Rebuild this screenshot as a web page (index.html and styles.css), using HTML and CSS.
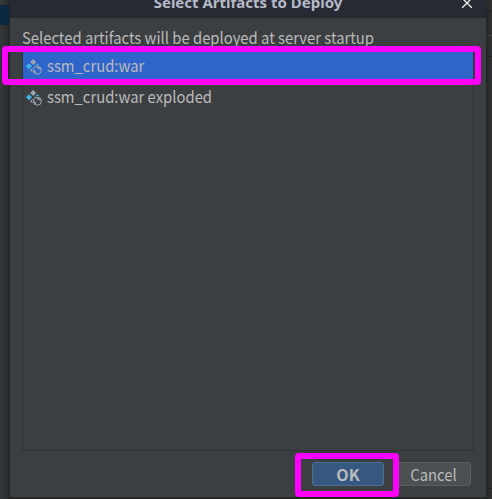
FILE: index.html
```html
<!DOCTYPE html>
<html lang="en">
<head>
<meta charset="utf-8">
<title>Select Artifacts to Deploy</title>
<link rel="stylesheet" href="styles.css">
</head>
<body>
<svg class="defs" width="0" height="0">
  <symbol id="artifact" viewBox="0 0 16 16">
    <path fill="#9da7b0" d="M7.2 0 10.1 3 7.2 6 4.2 3z"/>
    <path fill="#40b6e0" d="M3 4.2 6 7.2 3 10.2 0 7.2z"/>
    <path fill="#40b6e0" d="M11.3 4.2 13.4 6.3Q10.5 5.6 8.9 7.2L8.4 7.2z"/>
    <path fill="#9da7b0" d="M6.8 8.5Q5.6 10.7 6.6 13.6L4.2 11.3z"/>
    <circle cx="11.4" cy="11.2" r="4" fill="none" stroke="#9da7b0" stroke-width="1"/>
    <path fill="#9da7b0" d="M7.6 10.6 9.8 12.2 10 14.4 8.6 13.8zM11 7.6 14 8.4 15 10.4 13.8 10.8 13.2 9.8 11.2 9.8z"/>
  </symbol>
</svg>
<div class="backdrop"><i class="selection"></i><i class="rule one"></i><i class="rule two"></i><i class="rule three"></i><i class="rule four"></i></div>
<main class="dialog">
  <header class="titlebar">
    <h1>Select Artifacts to Deploy</h1>
    <svg class="close" width="12" height="12" viewBox="0 0 12 12"><path d="M1.2 1.2 10.8 10.8M10.8 1.2 1.2 10.8"/></svg>
  </header>
  <p class="caption"><span class="narrow">Selected artifacts will be deployed at server startup</span></p>
  <ul class="list">
    <li class="selected"><svg><use href="#artifact"/></svg><span class="narrow">ssm_crud:war</span></li>
    <li><svg><use href="#artifact"/></svg><span class="narrow">ssm_crud:war exploded</span></li>
  </ul>
  <footer>
    <button class="primary">OK</button>
    <button><span class="narrow center">Cancel</span></button>
  </footer>
</main>
<div class="mark row-mark"></div>
<div class="mark ok-mark"></div>
</body>
</html>
```

FILE: styles.css
```css
* { box-sizing: border-box; }
body {
  margin: 0;
  width: 492px;
  height: 499px;
  overflow: hidden;
  position: relative;
  background: #303234;
  color: #bbbbbb;
  font: 16px/24px "Noto Sans CJK SC", sans-serif;
}
.defs { position: absolute; }
.backdrop {
  position: absolute;
  inset: 0;
  background: linear-gradient(90deg, #36393b 0, #292b2c 10px, #292b2c 486px, #303234 492px);
}
.selection { position: absolute; left: 0; top: 5px; width: 10px; height: 20px; background: #0c2942; }
.rule { position: absolute; left: 486px; width: 6px; height: 1px; background: #242626; }
.one { top: 11px; }
.two { top: 35px; background: #454748; }
.three { top: 56px; }
.four { top: 488px; }
.dialog {
  position: relative;
  width: 476px;
  height: 497px;
  margin-left: 10px;
  background: #3c3f41;
  box-shadow: 0 0 5px #202224;
  display: flex;
  flex-direction: column;
}
.titlebar {
  height: 18px;
  flex: none;
  background: #282a33;
  display: flex;
  justify-content: center;
  position: relative;
}
h1 {
  margin: -10px 0 0;
  font: bold 15px/24px "Noto Sans", sans-serif;
  color: #b4bac8;
  white-space: nowrap;
}
.close { position: absolute; left: 451px; top: -3px; }
.close path { stroke: #f2f2f2; stroke-width: 1.3; fill: none; }
.narrow { display: inline-block; transform: scaleX(0.926); transform-origin: left; white-space: nowrap; }
.narrow.center { transform-origin: 60% 50%; }
.caption { margin: 7px 0 0 12px; height: 26px; flex: none; white-space: nowrap; }
.list {
  list-style: none;
  margin: 0 12px;
  padding: 0;
  width: 452px;
  height: 400px;
  flex: none;
  border: 1px solid #323232;
}
.list li { height: 31px; display: flex; align-items: flex-start; padding: 1px 0 0 3px; gap: 5px; }
.list svg { width: 16px; height: 16px; flex: none; margin-top: 6px; }
.list .selected { background: #2f65ca; }
footer { display: flex; justify-content: flex-end; gap: 12px; padding: 11px 15px 0 0; }
button {
  width: 75px;
  height: 24px;
  padding: 0;
  border: 1px solid #5e6060;
  border-radius: 3px;
  background: #4c5052;
  color: #bbbbbb;
  font: 16px/22px "Noto Sans CJK SC", sans-serif;
}
.primary { width: 72px; background: #365880; border-color: #4c708c; font-weight: bold; }
.mark { position: absolute; border: 6px solid #ff00ff; border-radius: 4px; }
.row-mark { left: 2px; top: 46px; width: 479px; height: 39px; }
.ok-mark { left: 295px; top: 453px; width: 104px; height: 44px; }
```
